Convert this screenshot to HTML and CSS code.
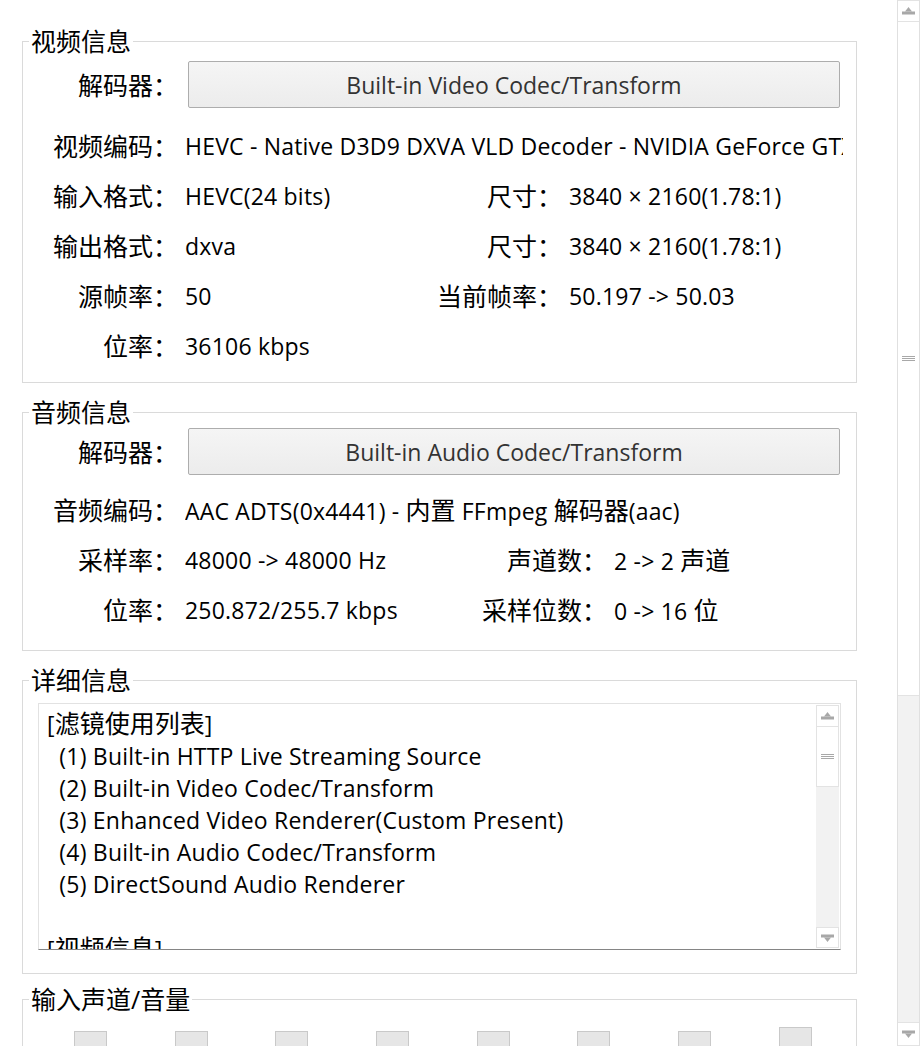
FILE: index.html
```html
<!DOCTYPE html>
<html lang="zh-CN">
<head>
    <meta charset="UTF-8">
    <meta name="viewport" content="width=device-width, initial-scale=1.0">
    <title>属性 - 视频信息</title>
    <link rel="stylesheet" href="styles.css">
</head>
<body>
    <div class="window">
        <main class="panel">
            <fieldset class="group group-video">
                <legend>视频信息</legend>
                <div class="decoder-line">
                    <span class="label">解码器：</span>
                    <button class="decoder-btn">Built-in Video Codec/Transform</button>
                </div>
                <div class="info-grid">
                    <span class="label">视频编码：</span>
                    <span class="value span-3">HEVC - Native D3D9 DXVA VLD Decoder - NVIDIA GeForce GTX</span>

                    <span class="label">输入格式：</span>
                    <span class="value">HEVC(24 bits)</span>
                    <span class="label">尺寸：</span>
                    <span class="value">3840 × 2160(1.78:1)</span>

                    <span class="label">输出格式：</span>
                    <span class="value">dxva</span>
                    <span class="label">尺寸：</span>
                    <span class="value">3840 × 2160(1.78:1)</span>

                    <span class="label">源帧率：</span>
                    <span class="value">50</span>
                    <span class="label">当前帧率：</span>
                    <span class="value">50.197 -&gt; 50.03</span>

                    <span class="label">位率：</span>
                    <span class="value">36106 kbps</span>
                </div>
            </fieldset>

            <fieldset class="group group-audio">
                <legend>音频信息</legend>
                <div class="decoder-line">
                    <span class="label">解码器：</span>
                    <button class="decoder-btn">Built-in Audio Codec/Transform</button>
                </div>
                <div class="info-grid">
                    <span class="label">音频编码：</span>
                    <span class="value span-3">AAC ADTS(0x4441) - <span class="cjk">内置</span> FFmpeg <span class="cjk">解码器</span>(aac)</span>

                    <span class="label">采样率：</span>
                    <span class="value">48000 -&gt; 48000 Hz</span>
                    <span class="label">声道数：</span>
                    <span class="value">2 -&gt; 2 <span class="cjk">声道</span></span>

                    <span class="label">位率：</span>
                    <span class="value">250.872/255.7 kbps</span>
                    <span class="label">采样位数：</span>
                    <span class="value">0 -&gt; 16 <span class="cjk">位</span></span>
                </div>
            </fieldset>

            <fieldset class="group group-detail">
                <legend>详细信息</legend>
                <div class="detail-box">
                    <div class="detail-text">[<span class="cjk">滤镜使用列表</span>]
  (1) Built-in HTTP Live Streaming Source
  (2) Built-in Video Codec/Transform
  (3) Enhanced Video Renderer(Custom Present)
  (4) Built-in Audio Codec/Transform
  (5) DirectSound Audio Renderer

[<span class="cjk">视频信息</span>]</div>
                    <div class="scroll scroll-small">
                        <div class="scroll-btn">
                            <svg width="13" height="8" viewBox="0 0 13 8"><polygon points="6.5,0 10,4.5 3,4.5" fill="#a8a8a8"/><rect x="0" y="4.5" width="13" height="3" fill="#a8a8a8"/></svg>
                        </div>
                        <div class="scroll-thumb thumb-small"><span class="grip"></span></div>
                        <div class="scroll-track"></div>
                        <div class="scroll-btn">
                            <svg width="13" height="8" viewBox="0 0 13 8"><rect x="0" y="0.5" width="13" height="3" fill="#a8a8a8"/><polygon points="3,3.5 10,3.5 6.5,8" fill="#a8a8a8"/></svg>
                        </div>
                    </div>
                </div>
            </fieldset>

            <fieldset class="group group-volume">
                <legend>输入声道/音量</legend>
                <div class="meters">
                    <div class="meter"></div>
                    <div class="meter"></div>
                    <div class="meter"></div>
                    <div class="meter"></div>
                    <div class="meter"></div>
                    <div class="meter"></div>
                    <div class="meter"></div>
                    <div class="meter meter-tall"></div>
                </div>
            </fieldset>
        </main>

        <div class="scroll scroll-main">
            <div class="scroll-btn">
                <svg width="13" height="8" viewBox="0 0 13 8"><polygon points="6.5,0 10,4.5 3,4.5" fill="#a8a8a8"/><rect x="0" y="4.5" width="13" height="3" fill="#a8a8a8"/></svg>
            </div>
            <div class="scroll-thumb thumb-main"><span class="grip"></span></div>
            <div class="scroll-track"></div>
            <div class="scroll-btn">
                <svg width="13" height="8" viewBox="0 0 13 8"><rect x="0" y="0.5" width="13" height="3" fill="#a8a8a8"/><polygon points="3,3.5 10,3.5 6.5,8" fill="#a8a8a8"/></svg>
            </div>
        </div>
    </div>
</body>
</html>
```
FILE: styles.css
```css
* {
    margin: 0;
    padding: 0;
    box-sizing: border-box;
}

body {
    font-family: "Open Sans", "Noto Sans CJK SC", sans-serif;
    font-size: 23px;
    letter-spacing: 0.2px;
    color: #000;
    background: #fff;
}

/* chinese runs are drawn a little larger, like the original UI font */
.cjk {
    font-size: 25px;
    letter-spacing: 0;
}

.window {
    display: flex;
    height: 1046px;
    overflow: hidden;
}

.panel {
    width: 897px;
    flex: none;
    padding: 27px 40px 0 22px;
}

/* group boxes */
.group {
    border: 1px solid #dadada;
    min-width: 0;
    margin-bottom: 15px;
    padding: 0 16px 0 0;
}

.group legend {
    font-size: 25px;
    line-height: 28px;
    letter-spacing: 0;
    margin-left: 6px;
    padding: 0 2px;
    color: #000;
}

.group-video {
    padding-top: 6px;
    padding-bottom: 11px;
}

.group-audio {
    padding-top: 2px;
    padding-bottom: 15px;
}

.group-detail {
    padding: 9px 15px 23px 0;
    margin-bottom: 11px;
}

.group-volume {
    padding: 14px 0 0 0;
}

/* decoder row */
.decoder-line {
    display: flex;
    align-items: center;
    height: 47px;
}

.decoder-line .label {
    width: 155px;
    flex: none;
}

.decoder-btn {
    flex: 1;
    height: 47px;
    margin-left: 10px;
    font-family: inherit;
    font-size: 23px;
    letter-spacing: 0;
    color: #333;
    background: linear-gradient(#f5f5f5, #ececec);
    border: 1px solid #adadad;
    border-radius: 2px;
}

/* label / value grid */
.info-grid {
    display: grid;
    grid-template-columns: 155px 230px 140px 1fr;
    grid-auto-rows: 50px;
    column-gap: 7px;
    align-items: center;
    margin-top: 13px;
}

.group-audio .info-grid {
    grid-template-columns: 155px 230px 185px 1fr;
    margin-top: 10px;
}

.label {
    font-size: 25px;
    text-align: right;
    white-space: nowrap;
    letter-spacing: 0;
    line-height: 50px;
}

.value {
    white-space: nowrap;
    overflow: hidden;
    line-height: 50px;
}

.span-3 {
    grid-column: span 3;
    margin-right: -3px;
}

/* detail text box */
.detail-box {
    display: flex;
    height: 247px;
    margin-left: 15px;
    border: 1px solid #e2e2e2;
    border-bottom-color: #858585;
}

.detail-text {
    flex: 1;
    padding: 3px 8px;
    line-height: 32px;
    white-space: pre;
    overflow: hidden;
}

/* fake scrollbars */
.scroll {
    display: flex;
    flex-direction: column;
    width: 23px;
    flex: none;
}

.scroll-small {
    margin: 1px 1px 1px 0;
}

.scroll-main {
    border-left: 1px solid #e0e0e0;
    border-right: 1px solid #e0e0e0;
}

.scroll-btn {
    height: 22px;
    flex: none;
    display: flex;
    align-items: center;
    justify-content: center;
    background: #fff;
    border: 1px solid #e3e3e3;
}

.scroll-small .scroll-btn:last-child {
    height: 21px;
}

.scroll-main .scroll-btn {
    border-left: none;
    border-right: none;
}

.scroll-main .scroll-btn:last-child {
    height: 24px;
}

.scroll-thumb {
    flex: none;
    display: flex;
    align-items: center;
    justify-content: center;
    background: #fff;
    border: 1px solid #e3e3e3;
    border-top: none;
}

.scroll-main .scroll-thumb {
    border-left: none;
    border-right: none;
}

.thumb-small {
    height: 60px;
}

.thumb-main {
    height: 674px;
}

.grip {
    width: 13px;
    height: 5px;
    border-top: 1px solid #a8a8a8;
    border-bottom: 1px solid #a8a8a8;
    background: linear-gradient(transparent 1px, #a8a8a8 1px, #a8a8a8 2px, transparent 2px);
}

.scroll-track {
    flex: 1;
    background: #f2f2f2;
}

/* volume meters */
.meters {
    display: flex;
    align-items: flex-end;
    gap: 67.7px;
    padding-left: 51px;
}

.meter {
    width: 33px;
    height: 60px;
    background: #e6e6e6;
    border: 1px solid #c9c9c9;
}

.meter-tall {
    height: 64px;
}
```
